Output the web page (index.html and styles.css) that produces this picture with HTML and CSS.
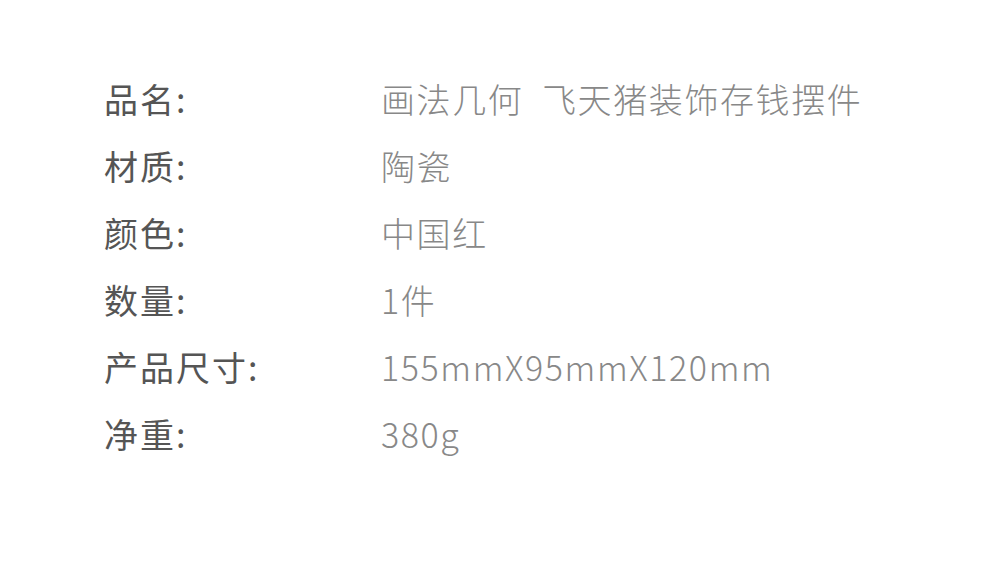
FILE: index.html
```html
<!DOCTYPE html>
<html lang="zh-CN">
<head>
    <meta charset="UTF-8">
    <meta name="viewport" content="width=device-width, initial-scale=1.0">
    <title>产品参数</title>
    <link rel="stylesheet" href="styles.css">
</head>
<body>
    <div class="specs">
        <div class="row">
            <div class="label">品名:</div>
            <div class="value">画法几何&ensp;飞天猪装饰存钱摆件</div>
        </div>
        <div class="row">
            <div class="label">材质:</div>
            <div class="value">陶瓷</div>
        </div>
        <div class="row">
            <div class="label">颜色:</div>
            <div class="value">中国红</div>
        </div>
        <div class="row">
            <div class="label">数量:</div>
            <div class="value">1件</div>
        </div>
        <div class="row">
            <div class="label">产品尺寸:</div>
            <div class="value">155mmX95mmX120mm</div>
        </div>
        <div class="row">
            <div class="label">净重:</div>
            <div class="value">380g</div>
        </div>
    </div>
</body>
</html>
```

FILE: styles.css
```css
body {
    margin: 0;
    background-color: #ffffff;
    font-family: "Noto Sans CJK SC", "Noto Sans", sans-serif;
}

.specs {
    padding: 65px 0 0 104px;
}

.row {
    display: flex;
    height: 67px;
    line-height: 67px;
    font-size: 34px;
}

.label {
    width: 277px;
    color: #555555;
    letter-spacing: 2px;
}

.value {
    color: #888888;
    font-weight: 300;
    letter-spacing: 1.6px;
    white-space: pre;
}
```
